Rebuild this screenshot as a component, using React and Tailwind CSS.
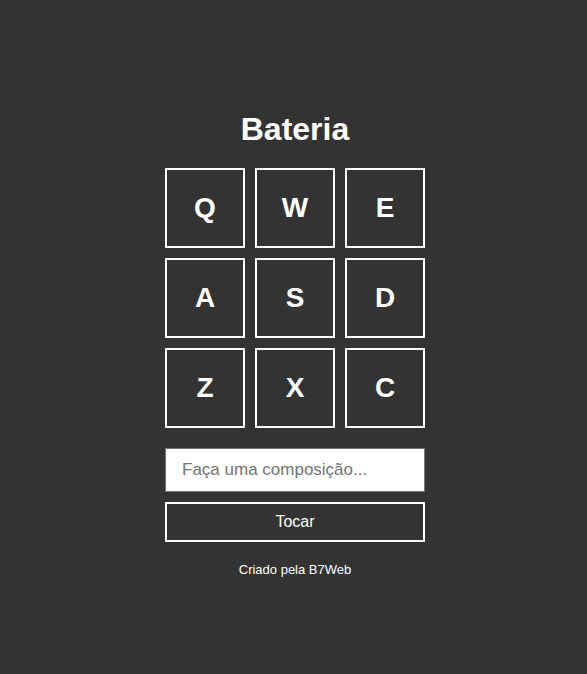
import { useState } from "react";

const KEYS = ["Q", "W", "E", "A", "S", "D", "Z", "X", "C"];

export default function App() {
  const [song, setSong] = useState("");

  return (
    <div className="min-h-[674px] bg-[#333333] text-white font-['Liberation_Sans',Arial,sans-serif] flex justify-center pl-[3px]">
      <div className="w-[260px] flex flex-col items-center pt-[111px]">
        <h1 className="text-[32px] font-bold leading-[37px]">Bateria</h1>

        <div className="mt-[20px] grid grid-cols-3 gap-[10px]">
          {KEYS.map((k) => (
            <div
              key={k}
              className="w-[80px] h-[80px] border-2 border-white flex items-center justify-center text-[28px] font-bold select-none"
            >
              {k}
            </div>
          ))}
        </div>

        <input
          value={song}
          onChange={(e) => setSong(e.target.value)}
          placeholder="Faça uma composição..."
          className="mt-[20px] w-full h-[44px] bg-white border border-[#767676] px-[16px] text-[17px] text-black placeholder:text-[#757575] outline-none"
        />

        <button className="mt-[10px] w-full h-[40px] border-2 border-white text-[16px] text-white">
          Tocar
        </button>

        <p className="mt-[20px] text-[13px] leading-[15px]">Criado pela B7Web</p>
      </div>
    </div>
  );
}
